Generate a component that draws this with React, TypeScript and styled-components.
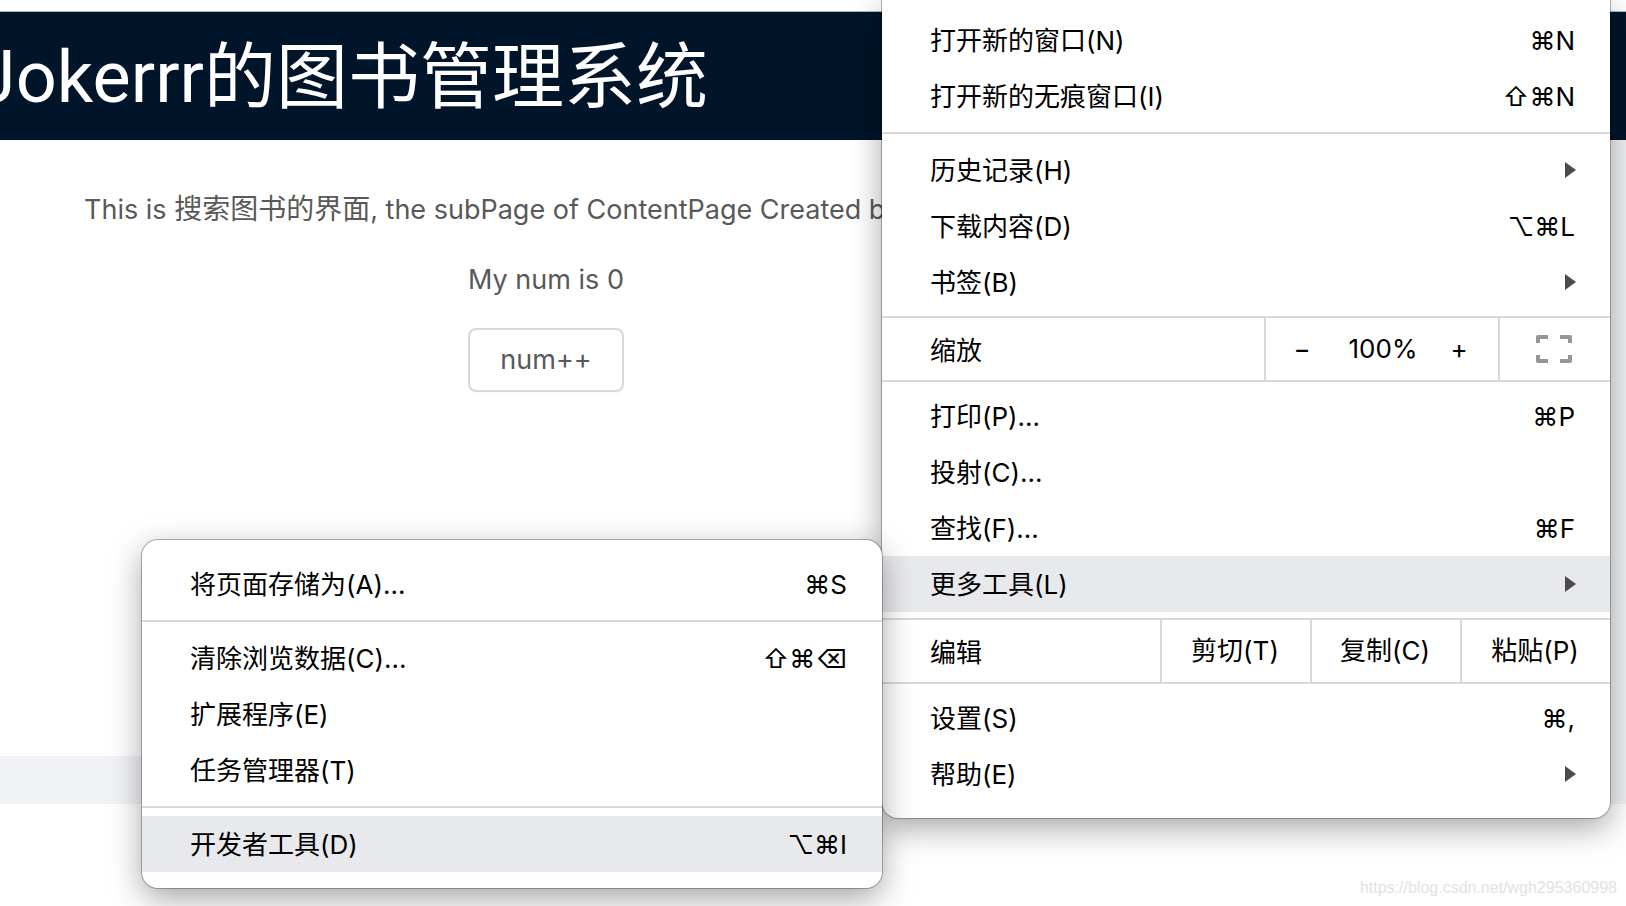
import React, { useState } from "react";
import styled, { createGlobalStyle } from "styled-components";

const GlobalStyle = createGlobalStyle`
  * { box-sizing: border-box; }
  body {
    margin: 0;
    background: #fff;
    font-family: Inter, "Noto Sans CJK SC", "Liberation Sans", sans-serif;
  }
  button {
    margin: 0;
    padding: 0;
    border: 0;
    background: none;
    color: inherit;
    font: inherit;
    cursor: pointer;
  }
`;

const LINE = "#d9d9d9";

const Page = styled.div`
  position: relative;
  min-height: 100vh;
  overflow: hidden;
`;

const ToolbarEdge = styled.div`
  height: 12px;
  border-bottom: 1px solid #b6b6b6;
`;

const Header = styled.header`
  height: 128px;
  padding-top: 4px;
  background: #001529;
  color: #fff;
`;

const Title = styled.h1`
  margin: 0 0 0 -24px;
  font-family: Roboto, "Noto Sans CJK SC", sans-serif;
  font-size: 72px;
  line-height: 124px;
  font-weight: 400;
  white-space: nowrap;
`;

const Layout = styled.div`
  padding: 0 48px 48px 0;
  background: #f0f2f5;
`;

const Content = styled.main`
  min-height: 616px;
  padding: 48px 0 0 84px;
  background: #fff;
  color: #595959;
  font-size: 27px;
  line-height: 44px;
`;

const Column = styled.div`
  display: flex;
  flex-direction: column;
  align-items: center;
  gap: 26px;
  width: 924px;
`;

const Line = styled.p<{ $start?: boolean }>`
  margin: 0;
  align-self: ${(p) => (p.$start ? "flex-start" : "center")};
  white-space: nowrap;
`;

const Han = styled.span`
  font-size: 28px;
  line-height: 1;
`;

const CountButton = styled.button`
  height: 64px;
  padding: 0 30px;
  border: 2px solid ${LINE};
  border-radius: 8px;
  box-shadow: 0 4px 0 rgba(0, 0, 0, 0.015);
`;

const Menu = styled.div`
  position: absolute;
  background: #fff;
  color: #000;
  font-size: 26px;
  line-height: 56px;
  white-space: nowrap;
  box-shadow: 0 0 0 1px rgba(0, 0, 0, 0.28), 0 10px 32px rgba(0, 0, 0, 0.36);
`;

const MainMenu = styled(Menu)`
  top: 0;
  right: 16px;
  width: 728px;
  padding: 12px 0 16px;
  border-radius: 0 0 16px 16px;
`;

const SubMenu = styled(Menu)`
  top: 540px;
  right: 744px;
  width: 740px;
  padding: 16px 0;
  border-radius: 16px;
`;

const Item = styled.button<{ $active?: boolean }>`
  display: flex;
  align-items: center;
  justify-content: space-between;
  width: 100%;
  height: 56px;
  padding: 0 34px 0 48px;
  background: ${(p) => (p.$active ? "#e8e9ed" : "transparent")};
  text-align: left;
`;

const ItemText = styled.span`
  padding: 2px 1px 0 0;
`;

const Separator = styled.hr`
  height: 2px;
  margin: 8px 0;
  border: 0;
  background: ${LINE};
`;

const SplitRow = styled.div`
  display: flex;
  align-items: stretch;
  height: 66px;
  margin: 6px 0;
  border: solid ${LINE};
  border-width: 2px 0;
  line-height: 62px;
`;

const SplitLabel = styled.span`
  flex: 1;
  padding: 2px 0 0 48px;
`;

const SplitButton = styled.button<{ $width: number }>`
  display: flex;
  align-items: center;
  justify-content: center;
  width: ${(p) => p.$width}px;
  padding: 0 2px 1px 0;
  border-left: 2px solid ${LINE};
`;

const ZoomCell = styled.div`
  display: grid;
  grid-template-columns: 72px 1fr 78px;
  width: 234px;
  border-left: 2px solid ${LINE};
  text-align: center;
`;

const ZoomValue = styled.span`
  padding-left: 8px;
`;

const Watermark = styled.span`
  position: absolute;
  right: 9px;
  bottom: 6px;
  color: #e2e2e2;
  font-family: "Liberation Sans", sans-serif;
  font-size: 16px;
  line-height: 24px;
`;

const Arrow = () => (
  <svg width="11" height="16" viewBox="0 0 11 16" aria-hidden="true">
    <path d="M0 0L11 8L0 16Z" fill="#4c4c4c" />
  </svg>
);

const FullscreenIcon = () => (
  <svg width="36" height="28" viewBox="0 0 36 28" aria-hidden="true">
    <path
      d="M2 8V2H12M24 2H34V8M34 20V26H24M12 26H2V20"
      fill="none"
      stroke="#969696"
      strokeWidth="4"
      strokeLinejoin="round"
    />
  </svg>
);

interface EntryProps {
  label: string;
  keys?: string;
  sub?: boolean;
  active?: boolean;
}

const Entry = ({ label, keys, sub, active }: EntryProps) => (
  <Item role="menuitem" $active={active} aria-haspopup={sub ? "menu" : undefined}>
    <ItemText>{label}</ItemText>
    {keys && <ItemText>{keys}</ItemText>}
    {sub && <Arrow />}
  </Item>
);

export default function App() {
  const [num, setNum] = useState(0);
  return (
    <Page>
      <GlobalStyle />
      <ToolbarEdge />
      <Header>
        <Title>Jokerrr的图书管理系统</Title>
      </Header>
      <Layout>
        <Content>
          <Column>
            <Line $start>
              This is <Han>搜索图书的界面</Han>, the subPage of ContentPage Created by
            </Line>
            <Line>My num is {num}</Line>
            <CountButton onClick={() => setNum(num + 1)}>num++</CountButton>
          </Column>
        </Content>
      </Layout>

      <MainMenu role="menu">
        <Entry label="打开新的窗口(N)" keys="⌘N" />
        <Entry label="打开新的无痕窗口(I)" keys="⇧⌘N" />
        <Separator />
        <Entry label="历史记录(H)" sub />
        <Entry label="下载内容(D)" keys="⌥⌘L" />
        <Entry label="书签(B)" sub />
        <SplitRow>
          <SplitLabel>缩放</SplitLabel>
          <ZoomCell>
            <button aria-label="缩小">−</button>
            <ZoomValue>100%</ZoomValue>
            <button aria-label="放大">+</button>
          </ZoomCell>
          <SplitButton $width={112} aria-label="全屏">
            <FullscreenIcon />
          </SplitButton>
        </SplitRow>
        <Entry label="打印(P)..." keys="⌘P" />
        <Entry label="投射(C)..." />
        <Entry label="查找(F)..." keys="⌘F" />
        <Entry label="更多工具(L)" sub active />
        <SplitRow>
          <SplitLabel>编辑</SplitLabel>
          <SplitButton $width={150}>剪切(T)</SplitButton>
          <SplitButton $width={150}>复制(C)</SplitButton>
          <SplitButton $width={150}>粘贴(P)</SplitButton>
        </SplitRow>
        <Entry label="设置(S)" keys="⌘," />
        <Entry label="帮助(E)" sub />
      </MainMenu>

      <SubMenu role="menu">
        <Entry label="将页面存储为(A)..." keys="⌘S" />
        <Separator />
        <Entry label="清除浏览数据(C)..." keys="⇧⌘⌫" />
        <Entry label="扩展程序(E)" />
        <Entry label="任务管理器(T)" />
        <Separator />
        <Entry label="开发者工具(D)" keys="⌥⌘I" active />
      </SubMenu>

      <Watermark>https://blog.csdn.net/wgh295360998</Watermark>
    </Page>
  );
}
